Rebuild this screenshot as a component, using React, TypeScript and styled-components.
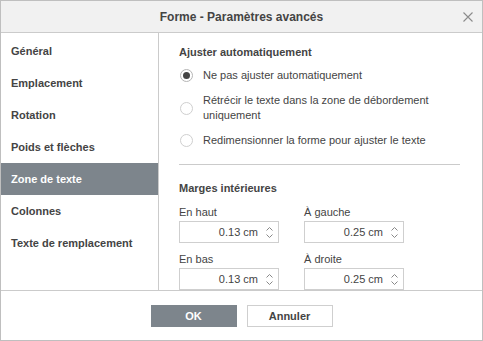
import React from "react";
import styled, { createGlobalStyle } from "styled-components";

const GlobalStyle = createGlobalStyle`
  html, body { margin: 0; padding: 0; background: #fff; }
  body { font-family: "Liberation Sans", Arial, sans-serif; color: #444; }
  * { box-sizing: border-box; }
`;

const Window = styled.div`
  width: 483px;
  height: 341px;
  border: 1px solid #bfbfbf;
  display: flex;
  flex-direction: column;
  background: #fff;
`;

const Header = styled.div`
  height: 32px;
  flex: none;
  background: #f1f1f1;
  border-bottom: 1px solid #cbcbcb;
  display: grid;
  grid-template-columns: 1fr auto 1fr;
  align-items: center;
  padding-right: 9px;
`;

const Title = styled.div`
  grid-column: 2;
  font-size: 12px;
  font-weight: 700;
  color: #444;
  padding-left: 9px;
`;

const CloseButton = styled.button`
  grid-column: 3;
  justify-self: end;
  width: 10px;
  height: 10px;
  padding: 0;
  border: none;
  background: transparent;
  display: flex;
  margin-top: 1px;
`;

const Body = styled.div`
  flex: 1;
  display: flex;
  min-height: 0;
`;

const Sidebar = styled.ul`
  width: 158px;
  flex: none;
  margin: 0;
  padding: 2px 0 0;
  list-style: none;
  border-right: 1px solid #cbcbcb;
`;

const NavItem = styled.li<{ $active?: boolean }>`
  height: 32px;
  display: flex;
  align-items: center;
  padding-left: 10px;
  font-size: 11px;
  font-weight: 700;
  color: ${(p) => (p.$active ? "#fff" : "#444")};
  background: ${(p) => (p.$active ? "#7d858c" : "transparent")};
`;

const Panel = styled.div`
  flex: 1;
  padding: 12px 22px 0 20px;
  display: flex;
  flex-direction: column;
  & > * { flex: none; }
`;

const SectionTitle = styled.div`
  font-size: 11px;
  font-weight: 700;
  line-height: 15px;
  color: #444;
`;

const RadioList = styled.div`
  display: flex;
  flex-direction: column;
  gap: 10px;
  margin-top: 8px;
`;

const RadioRow = styled.label`
  display: flex;
  align-items: center;
  gap: 10px;
  font-size: 11px;
  line-height: 15px;
  color: #444;
`;

const RadioCircle = styled.span<{ $checked?: boolean }>`
  width: 13px;
  height: 13px;
  flex: none;
  margin-left: 1px;
  border-radius: 50%;
  border: 1px solid ${(p) => (p.$checked ? "#b5b5b5" : "#cfcfcf")};
  display: flex;
  align-items: center;
  justify-content: center;
  &::after {
    content: "";
    width: 7px;
    height: 7px;
    border-radius: 50%;
    background: ${(p) => (p.$checked ? "#444" : "transparent")};
  }
`;

const Separator = styled.div`
  height: 1px;
  background: #cbcbcb;
  margin: 16px 0 16px;
`;

const FieldGrid = styled.div`
  display: grid;
  grid-template-columns: 125px 100px;
  row-gap: 9px;
  margin-top: 9px;
`;

const Field = styled.div`
  display: flex;
  flex-direction: column;
  gap: 1px;
`;

const FieldLabel = styled.div`
  font-size: 11px;
  line-height: 15px;
  color: #444;
`;

const Spinner = styled.div`
  width: 100px;
  height: 22px;
  border: 1px solid #cfcfcf;
  display: flex;
  align-items: center;
  justify-content: flex-end;
  padding-right: 5px;
  font-size: 11px;
  color: #444;
`;

const SpinValue = styled.span`
  margin-right: 8px;
`;

const Arrows = styled.span`
  display: flex;
  flex-direction: column;
  gap: 3px;
`;

const Footer = styled.div`
  height: 50px;
  flex: none;
  border-top: 1px solid #cbcbcb;
  display: flex;
  align-items: center;
  justify-content: center;
  gap: 10px;
`;

const Button = styled.button<{ $primary?: boolean }>`
  width: 86px;
  height: 22px;
  font-family: "Liberation Sans", Arial, sans-serif;
  font-size: 11px;
  font-weight: 700;
  padding: 0;
  border: 1px solid ${(p) => (p.$primary ? "#7d858c" : "#cfcfcf")};
  background: ${(p) => (p.$primary ? "#7d858c" : "#fff")};
  color: ${(p) => (p.$primary ? "#fff" : "#444")};
`;

const Chevron = ({ up }: { up?: boolean }) => (
  <svg width="7" height="4" viewBox="0 0 7 4">
    <polyline
      points={up ? "0.5,3.5 3.5,0.5 6.5,3.5" : "0.5,0.5 3.5,3.5 6.5,0.5"}
      fill="none"
      stroke="#888"
      strokeWidth="1"
    />
  </svg>
);

const SpinField = ({ label, value }: { label: string; value: string }) => (
  <Field>
    <FieldLabel>{label}</FieldLabel>
    <Spinner>
      <SpinValue>{value}</SpinValue>
      <Arrows>
        <Chevron up />
        <Chevron />
      </Arrows>
    </Spinner>
  </Field>
);

const navItems = [
  "Général",
  "Emplacement",
  "Rotation",
  "Poids et flèches",
  "Zone de texte",
  "Colonnes",
  "Texte de remplacement",
];

export default function App() {
  return (
    <>
      <GlobalStyle />
      <Window>
        <Header>
          <Title>Forme - Paramètres avancés</Title>
          <CloseButton aria-label="Fermer">
            <svg width="10" height="10" viewBox="0 0 10 10">
              <path d="M0.5 0.5 L9.5 9.5 M9.5 0.5 L0.5 9.5" stroke="#8c8c8c" strokeWidth="1.1" />
            </svg>
          </CloseButton>
        </Header>
        <Body>
          <Sidebar>
            {navItems.map((n) => (
              <NavItem key={n} $active={n === "Zone de texte"}>
                {n}
              </NavItem>
            ))}
          </Sidebar>
          <Panel>
            <SectionTitle>Ajuster automatiquement</SectionTitle>
            <RadioList>
              <RadioRow>
                <RadioCircle $checked />
                <span>Ne pas ajuster automatiquement</span>
              </RadioRow>
              <RadioRow>
                <RadioCircle />
                <span>Rétrécir le texte dans la zone de débordement uniquement</span>
              </RadioRow>
              <RadioRow>
                <RadioCircle />
                <span>Redimensionner la forme pour ajuster le texte</span>
              </RadioRow>
            </RadioList>
            <Separator />
            <SectionTitle>Marges intérieures</SectionTitle>
            <FieldGrid>
              <SpinField label="En haut" value="0.13 cm" />
              <SpinField label="À gauche" value="0.25 cm" />
              <SpinField label="En bas" value="0.13 cm" />
              <SpinField label="À droite" value="0.25 cm" />
            </FieldGrid>
          </Panel>
        </Body>
        <Footer>
          <Button $primary>OK</Button>
          <Button>Annuler</Button>
        </Footer>
      </Window>
    </>
  );
}
